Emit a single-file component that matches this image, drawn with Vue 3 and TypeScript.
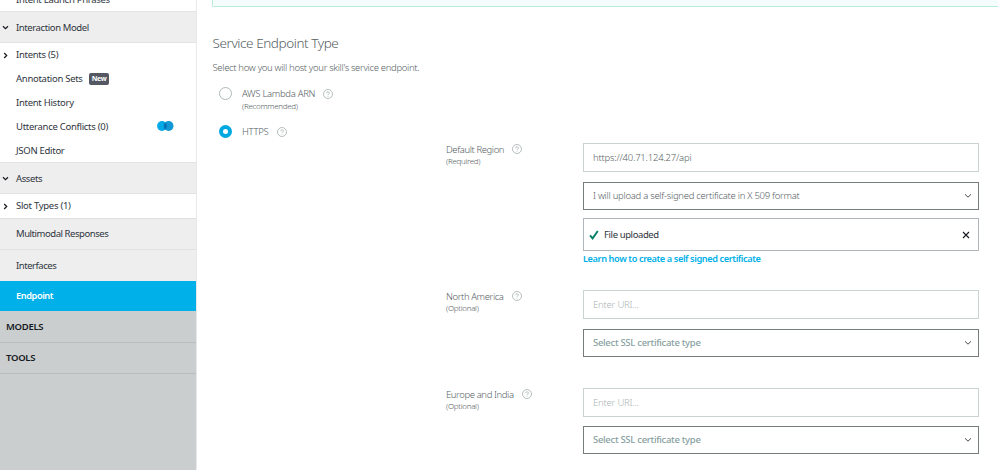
<script setup lang="ts">
interface NavItem {
  label: string
  kind: 'header' | 'item' | 'band' | 'active' | 'group'
  height: number
  chevron?: 'down' | 'right'
  badge?: string
  toggle?: boolean
}

interface Region {
  id: string
  name: string
  note: string
  url: string
  certificate: string
  uploaded: boolean
}

const nav: NavItem[] = [
  { label: 'Intent Launch Phrases', kind: 'item', height: 23 },
  { label: 'Interaction Model', kind: 'header', height: 32, chevron: 'down' },
  { label: 'Intents (5)', kind: 'item', height: 24, chevron: 'right' },
  { label: 'Annotation Sets', kind: 'item', height: 24, badge: 'New' },
  { label: 'Intent History', kind: 'item', height: 24 },
  { label: 'Utterance Conflicts (0)', kind: 'item', height: 24, toggle: true },
  { label: 'JSON Editor', kind: 'item', height: 23 },
  { label: 'Assets', kind: 'header', height: 32, chevron: 'down' },
  { label: 'Slot Types (1)', kind: 'item', height: 24, chevron: 'right' },
  { label: 'Multimodal Responses', kind: 'band', height: 31 },
  { label: 'Interfaces', kind: 'band', height: 32 },
  { label: 'Endpoint', kind: 'active', height: 30 },
  { label: 'MODELS', kind: 'group', height: 32 },
  { label: 'TOOLS', kind: 'group', height: 31 },
]

const regions: Region[] = [
  { id: 'default', name: 'Default Region', note: '(Required)', url: 'https://40.71.124.27/api', certificate: 'I will upload a self-signed certificate in X 509 format', uploaded: true },
  { id: 'na', name: 'North America', note: '(Optional)', url: '', certificate: '', uploaded: false },
  { id: 'eu', name: 'Europe and India', note: '(Optional)', url: '', certificate: '', uploaded: false },
]
</script>

<template>
  <div class="page">
    <aside class="sidebar">
      <div v-for="n in nav" :key="n.label" class="row" :class="n.kind" :style="{ height: n.height + 'px' }">
        <span class="lead">
          <svg v-if="n.chevron === 'down'" width="7" height="7" viewBox="0 0 7 7"><path d="M1 2.2 3.5 4.6 6 2.2" /></svg>
          <svg v-else-if="n.chevron === 'right'" width="7" height="7" viewBox="0 0 7 7"><path d="M2.2 1 4.7 3.5 2.2 6" /></svg>
        </span>
        <span class="label">{{ n.label }}</span>
        <span v-if="n.badge" class="badge">{{ n.badge }}</span>
        <svg v-if="n.toggle" class="toggle" width="17" height="10" viewBox="0 0 17 10">
          <circle cx="5" cy="5" r="4.9" fill="#00a8e6" />
          <circle cx="11.6" cy="5" r="4.9" fill="#1198d4" />
          <path d="M8.3 1.4a4.9 4.9 0 0 1 0 7.2a4.9 4.9 0 0 1 0-7.2z" fill="#0470b4" />
        </svg>
      </div>
    </aside>

    <main class="content">
      <div class="notice"></div>
      <h1 class="title">Service Endpoint Type</h1>
      <p class="intro">Select how you will host your skill's service endpoint.</p>

      <div class="option">
        <span class="radio"></span>
        <div class="option-text">
          <div class="name">AWS Lambda ARN</div>
          <div class="note">(Recommended)</div>
        </div>
        <svg class="help" viewBox="0 0 10 10"><circle cx="5" cy="5" r="4.5" /><path d="M3.7 4.1a1.3 1.2 0 1 1 2 .9Q5 5.4 5 6M5 6.8v.8" /></svg>
      </div>
      <div class="option https">
        <span class="radio checked"></span>
        <div class="option-text"><div class="name">HTTPS</div></div>
        <svg class="help" viewBox="0 0 10 10"><circle cx="5" cy="5" r="4.5" /><path d="M3.7 4.1a1.3 1.2 0 1 1 2 .9Q5 5.4 5 6M5 6.8v.8" /></svg>
      </div>

      <div class="regions">
        <section v-for="r in regions" :key="r.id" class="region" :class="r.id">
          <div class="region-label">
            <div>
              <div class="name">{{ r.name }}</div>
              <div class="note">{{ r.note }}</div>
            </div>
            <svg class="help" viewBox="0 0 10 10"><circle cx="5" cy="5" r="4.5" /><path d="M3.7 4.1a1.3 1.2 0 1 1 2 .9Q5 5.4 5 6M5 6.8v.8" /></svg>
          </div>
          <div class="fields">
            <div class="field input" :class="{ empty: !r.url }">{{ r.url || 'Enter URI...' }}</div>
            <div class="field select" :class="{ empty: !r.certificate }">
              <span>{{ r.certificate || 'Select SSL certificate type' }}</span>
              <svg width="8" height="6" viewBox="0 0 8 6"><path d="M1 1.3 4 4.2 7 1.3" /></svg>
            </div>
            <template v-if="r.uploaded">
              <div class="field file">
                <svg class="check" width="10" height="10" viewBox="0 0 10 10"><path d="M1 5.4 3.6 8.4 8.8 1" /></svg>
                <span>File uploaded</span>
                <svg class="close" width="8" height="8" viewBox="0 0 8 8"><path d="M1 1 7 7M7 1 1 7" /></svg>
              </div>
              <a class="learn">Learn how to create a self signed certificate</a>
            </template>
          </div>
        </section>
      </div>
    </main>
  </div>
</template>

<style>
body {
  background: #fff;
  overflow: hidden;
}
</style>

<style scoped>
* {
  box-sizing: border-box;
}
.page {
  display: flex;
  width: 998px;
  height: 470px;
  overflow: hidden;
  font-family: 'Noto Sans', 'Open Sans', sans-serif;
  font-size: 9.5px;
  line-height: 12px;
  color: #2f3540;
  white-space: nowrap;
}
svg {
  display: block;
  flex: none;
  fill: none;
}
.sidebar {
  width: 197px;
  height: 482px;
  margin-top: -12px;
  flex: none;
  background: linear-gradient(#fff 0 300px, #cacece 300px);
  border-right: 1px solid #e8eaea;
}
.row {
  display: flex;
  align-items: center;
  letter-spacing: -0.28px;
}
.lead {
  width: 16px;
  padding-left: 2px;
  flex: none;
}
.lead path {
  stroke: #16191f;
  stroke-width: 1.2;
}
.header {
  background: #eee;
  border-top: 1px solid #e2e4e4;
  border-bottom: 1px solid #e2e4e4;
  letter-spacing: -0.4px;
}
.header .label {
  padding-top: 1px;
}
.band {
  background: #eee;
  border-top: 1px solid #dfe2e2;
  letter-spacing: -0.45px;
}
.active {
  background: #00b0e8;
  color: #fff;
  font-size: 9.2px;
  font-weight: 600;
  letter-spacing: -0.4px;
}
.group {
  background: #cacece;
  color: #16191f;
  font-weight: 600;
  border-bottom: 1px solid #b9bdbd;
}
.group .lead {
  width: 6px;
  padding: 0;
}
.badge {
  height: 12px;
  margin-left: 6px;
  padding: 0 3px;
  border-radius: 2px;
  background: #545863;
  color: #fff;
  font-size: 7px;
  font-weight: 700;
  letter-spacing: -0.3px;
}
.toggle {
  margin-left: auto;
  margin-right: 22px;
  margin-top: -2px;
}
.content {
  flex: 1;
  padding-left: 15px;
  color: #566064;
  font-weight: 300;
}
.notice {
  height: 7px;
  border: 1px solid #b9ecd9;
  border-top: 0;
  border-right: 0;
  border-radius: 0 0 0 2px;
  background: #f5fdfc;
}
.title {
  margin: 27px 0 0 0.5px;
  font-size: 13.5px;
  line-height: 18px;
  font-weight: 300;
  letter-spacing: -0.42px;
}
.intro {
  margin: 9px 0 0 0.5px;
  line-height: 14px;
  letter-spacing: -0.32px;
}
.option {
  display: flex;
  align-items: flex-start;
  height: 38px;
  margin-top: 12px;
  padding-left: 7px;
}
.https {
  height: 12px;
  margin-top: 0;
}
.option-text {
  padding-top: 1px;
}
.radio {
  width: 13px;
  height: 13px;
  margin-right: 10px;
  border: 1px solid #aeb9b9;
  border-radius: 50%;
}
.option .radio {
  margin-top: -0.5px;
}
.option .checked {
  border: 4px solid #00a8e1;
}
.name {
  letter-spacing: -0.3px;
}
.note {
  font-size: 8px;
  letter-spacing: -0.3px;
}
.help {
  width: 10px;
  height: 10px;
  margin: 2px 0 0 7.5px;
  stroke: #98a5a5;
  stroke-width: 0.7;
}
.https .help {
  margin-left: 9px;
}
.regions {
  margin-top: 6px;
  padding-left: 234px;
}
.region {
  display: flex;
  height: 98px;
}
.region.default {
  height: 147px;
}
.region-label {
  display: flex;
  align-items: flex-start;
  width: 137px;
}
.region-label .name {
  padding-top: 1px;
  letter-spacing: -0.4px;
}
.region-label .note {
  margin-top: -1px;
}
.region-label .help {
  margin: 0.5px 0 0 8px;
}
.fields {
  width: 396px;
}
.field {
  display: flex;
  align-items: center;
  height: 29px;
  padding: 0 9px;
  border: 1px solid #c9d3d3;
  letter-spacing: -0.2px;
}
.input {
  padding-top: 1px;
}
.input.empty {
  color: #aab3b3;
}
.select {
  height: 28px;
  margin-top: 10px;
  border-color: #767c7c;
  justify-content: space-between;
  padding-right: 6px;
  letter-spacing: -0.27px;
}
.eu .select {
  margin-top: 9px;
}
.select path {
  stroke: #444a50;
}
.select.empty {
  color: #879f9f;
  font-weight: 500;
  letter-spacing: -0.29px;
}
.file {
  height: 33px;
  margin-top: 8px;
  padding: 0 8px 0 5px;
  border-color: #b1b5bc;
  color: #2f3540;
  font-weight: 400;
  letter-spacing: -0.4px;
}
.check {
  margin-right: 5px;
}
.check path {
  stroke: #067f68;
  stroke-width: 1.9;
}
.close {
  margin-left: auto;
}
.close path {
  stroke: #16191f;
  stroke-width: 1.1;
}
.learn {
  display: block;
  margin-top: 2px;
  color: #00b0e8;
  font-size: 9.2px;
  font-weight: 600;
  letter-spacing: -0.4px;
}
</style>
